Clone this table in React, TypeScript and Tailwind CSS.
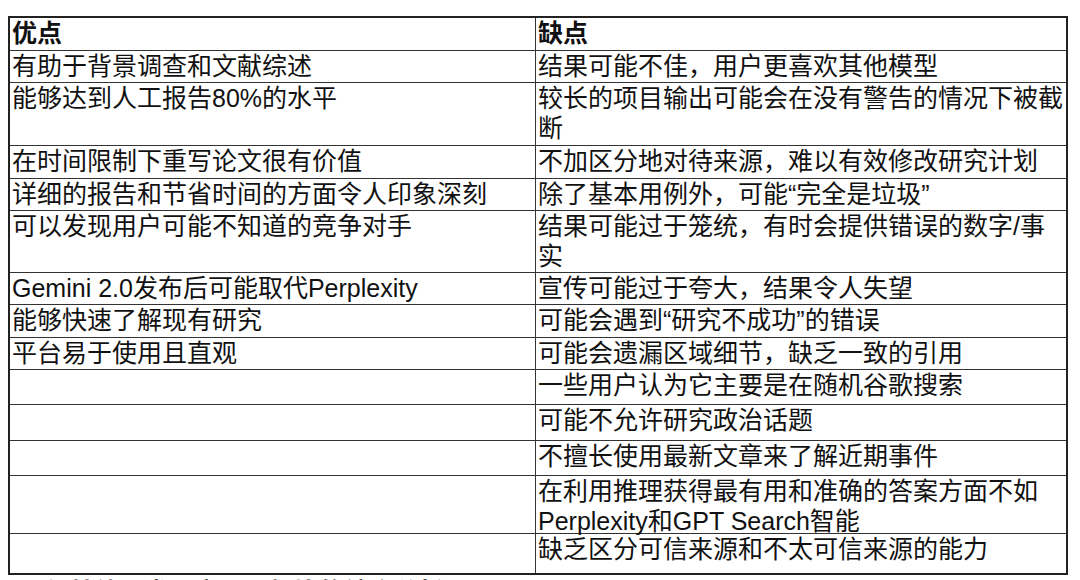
const rows: { pro: string; con: string; h: string }[] = [
  { pro: '有助于背景调查和文献综述', con: '结果可能不佳，用户更喜欢其他模型', h: 'h-[32px]' },
  { pro: '能够达到人工报告80%的水平', con: '较长的项目输出可能会在没有警告的情况下被截断', h: 'h-[63px]' },
  { pro: '在时间限制下重写论文很有价值', con: '不加区分地对待来源，难以有效修改研究计划', h: 'h-[33px]' },
  { pro: '详细的报告和节省时间的方面令人印象深刻', con: '除了基本用例外，可能“完全是垃圾”', h: 'h-[32px]' },
  { pro: '可以发现用户可能不知道的竞争对手', con: '结果可能过于笼统，有时会提供错误的数字/事实', h: 'h-[62px]' },
  { pro: 'Gemini 2.0发布后可能取代Perplexity', con: '宣传可能过于夸大，结果令人失望', h: 'h-[32px]' },
  { pro: '能够快速了解现有研究', con: '可能会遇到“研究不成功”的错误', h: 'h-[33px]' },
  { pro: '平台易于使用且直观', con: '可能会遗漏区域细节，缺乏一致的引用', h: 'h-[32px]' },
  { pro: '', con: '一些用户认为它主要是在随机谷歌搜索', h: 'h-[35px]' },
  { pro: '', con: '可能不允许研究政治话题', h: 'h-[36px]' },
  { pro: '', con: '不擅长使用最新文章来了解近期事件', h: 'h-[35px]' },
  { pro: '', con: '在利用推理获得最有用和准确的答案方面不如Perplexity和GPT Search智能', h: 'h-[58px]' },
  { pro: '', con: '缺乏区分可信来源和不太可信来源的能力', h: 'h-[39px]' },
]

export default function App() {
  return (
    <div
      className="min-h-screen w-[1080px] bg-white pl-2 pt-4 text-[25px] leading-[30px] text-[#111]"
      style={{ fontFamily: '"Liberation Sans", "Noto Sans CJK SC", sans-serif' }}
    >
      <div className="w-[1060px] border-2 border-[#222]">
        {/* Header */}
        <div className="flex h-[33px] border-b border-[#333]">
          <div className="w-[526px] border-r border-[#333] pl-[2px] font-bold">优点</div>
          <div className="flex-1 pl-[2px] font-bold">缺点</div>
        </div>

        {rows.map((r, i) => (
          <div
            key={i}
            className={`flex ${r.h} ${i < rows.length - 1 ? 'border-b border-[#333]' : ''}`}
          >
            <div className="w-[526px] border-r border-[#333] pl-[2px]">{r.pro}</div>
            <div className="flex-1 pl-[2px]">{r.con}</div>
          </div>
        ))}
      </div>

      <p className="mt-[2px] pl-[36px] font-bold">与其他同类研究工具相比的综合分析</p>
    </div>
  )
}
